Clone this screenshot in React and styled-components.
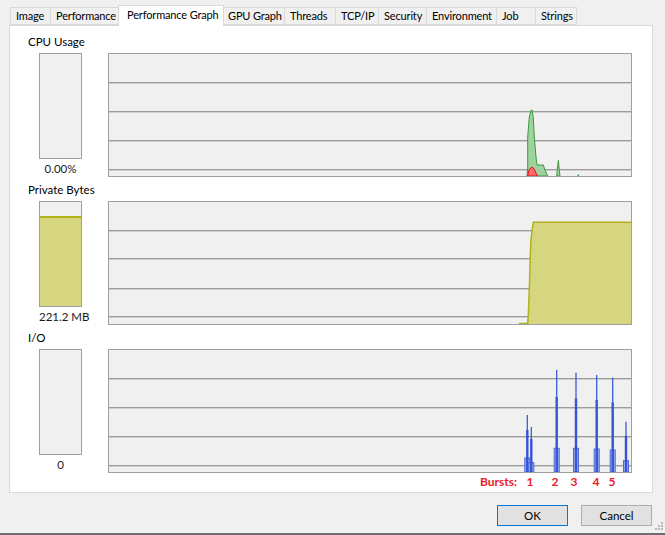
import React from 'react';
import styled, { createGlobalStyle } from 'styled-components';

const GlobalStyle = createGlobalStyle`
    html, body {
        margin: 0;
        padding: 0;
        background: #f0f0f0;
    }
    body {
        font-family: Lato, "Noto Sans", sans-serif;
        font-size: 11px;
        color: #000;
    }
`;

const Window = styled.div`
    position: relative;
    width: 665px;
    height: 535px;
    display: flex;
    flex-direction: column;
    background: #f0f0f0;
    overflow: hidden;
`;

const TabStrip = styled.div`
    display: flex;
    align-items: flex-end;
    height: 25px;
    box-sizing: border-box;
    padding: 5px 0 0 10px;
`;

const Tab = styled.div`
    box-sizing: border-box;
    width: ${props => props.w + (props.active ? 4 : 0)}px;
    height: ${props => props.active ? 21 : 18}px;
    margin: ${props => props.active ? '0 -2px -1px -2px' : '0'};
    padding-left: ${props => props.active ? 8 : 5}px;
    border: 1px solid #d9d9d9;
    border-bottom: ${props => props.active ? 'none' : '1px solid #d9d9d9'};
    border-right: ${props => props.active || props.last ? '1px solid #d9d9d9' : 'none'};
    background: ${props => props.active ? '#fff' : '#f0f0f0'};
    font-size: 11px;
    letter-spacing: -0.15px;
    line-height: ${props => props.active ? 17 : 16}px;
    white-space: nowrap;
    position: ${props => props.active ? 'relative' : 'static'};
    z-index: ${props => props.active ? 1 : 'auto'};
`;

const Panel = styled.div`
    box-sizing: border-box;
    width: 644px;
    height: 468px;
    margin-left: 9px;
    padding: 9px 0 0 18px;
    background: #fff;
    border: 1px solid #d9d9d9;
`;

const Section = styled.div`
    margin-bottom: ${props => props.last ? 0 : 6}px;
`;

const SectionLabel = styled.div`
    height: 18px;
    line-height: 14px;
    font-size: 11.5px;
`;

const Row = styled.div`
    display: flex;
    height: 124px;
    margin-left: 11px;
`;

const MeterColumn = styled.div`
    display: flex;
    flex-direction: column;
    width: 43px;
`;

const MeterBox = styled.div`
    box-sizing: border-box;
    height: 106px;
    border: 1px solid #a0a0a0;
    background: #f0f0f0;
    display: flex;
    flex-direction: column;
    justify-content: flex-end;
`;

const MeterFill = styled.div`
    background: #d6d680;
    border-top: 2px solid #b4b41e;
`;

const MeterValue = styled.div`
    margin-top: 3px;
    line-height: 14px;
    font-size: 11.5px;
    text-align: center;
    white-space: nowrap;
    color: #1a1a1a;
`;

const Graph = styled.div`
    box-sizing: border-box;
    width: 524px;
    height: 124px;
    margin-left: 26px;
    border: 1px solid #a0a0a0;
    background: #f0f0f0;
    svg {
        display: block;
    }
`;

const BurstsRow = styled.div`
    position: relative;
    width: 524px;
    height: 18px;
    margin-left: 80px;
    color: #e8202a;
    font-weight: 700;
    font-size: 12px;
    line-height: 18px;
`;

const BurstLabel = styled.span`
    position: absolute;
    top: 0;
    transform: ${props => props.center ? 'translateX(-50%)' : 'none'};
    white-space: nowrap;
`;

const ButtonBar = styled.div`
    display: flex;
    justify-content: flex-end;
    gap: 13px;
    padding: 12px 13px 0 0;
`;

const Button = styled.div`
    box-sizing: border-box;
    width: 71px;
    height: 21px;
    line-height: 19px;
    font-size: 11.5px;
    text-align: center;
    background: #e1e1e1;
    border: 1px solid ${props => props.focused ? '#0078d7' : '#adadad'};
`;

const BottomEdge = styled.div`
    margin-top: auto;
    height: 2px;
    background: #6e6e6e;
`;

const Grip = styled.svg`
    position: absolute;
    right: 2px;
    bottom: 3px;
`;

const tabs = [
    { name: 'Image', w: 40 },
    { name: 'Performance', w: 70 },
    { name: 'Performance Graph', w: 102, active: true },
    { name: 'GPU Graph', w: 62 },
    { name: 'Threads', w: 51 },
    { name: 'TCP/IP', w: 43 },
    { name: 'Security', w: 48 },
    { name: 'Environment', w: 70 },
    { name: 'Job', w: 39 },
    { name: 'Strings', w: 42 },
];

const GW = 522;
const GH = 122;

function GridLines({ ys }) {
    return (
        <g>
            {ys.map(y => (
                <g key={y}>
                    <rect x="0" y={y} width={GW} height="1" fill="#9c9c9c" />
                    <rect x="0" y={y + 1} width={GW} height="1" fill="#cfcfcf" />
                </g>
            ))}
        </g>
    );
}

function CpuChart() {
    return (
        <svg width={GW} height={GH}>
            <GridLines ys={[28, 57, 86, 115]} />
            <polygon
                points="418,122 418.7,114 418.7,83 420.3,63 422.2,56 423,56 424.3,64 425.3,83 427,103 428,111 434.3,111 436,116 438.7,122"
                fill="#9fd29f"
                stroke="#3a9a3a"
                strokeWidth="1"
            />
            <path d="M418.7,122 L419.6,117 Q422.7,110 425.6,116 L428.3,122 Z" fill="#ff6a6a" stroke="#e01010" strokeWidth="1" />
            <polygon points="447.7,122 449.3,106.5 451,122" fill="#9fd29f" stroke="#3a9a3a" strokeWidth="1" />
            <rect x="468.5" y="120.5" width="1.5" height="1.5" fill="#3a9a3a" />
        </svg>
    );
}

function MemoryChart() {
    const steps = '418.7,121.5 419.3,113.7 420,95.3 420.7,75.3 421.3,53.7 422,37 423.3,27 424.3,20.3 522,20.3';
    return (
        <svg width={GW} height={GH}>
            <GridLines ys={[28, 56, 86, 114]} />
            <polygon points={`418.7,122 ${steps} 522,122`} fill="#d6d680" />
            <polyline points={`410,121.5 ${steps}`} fill="none" stroke="#b0b01a" strokeWidth="1.5" />
        </svg>
    );
}

const spikes = [
    { x: 418.3, peak: 65, thick: 80, box: 108 },
    { x: 422.3, peak: 77, thick: 89, box: 112.7 },
    { x: 447.7, peak: 20, thick: 46.7, box: 98.3 },
    { x: 467, peak: 22.7, thick: 48.3, box: 98.3 },
    { x: 487.7, peak: 25, thick: 50, box: 99 },
    { x: 503.7, peak: 27.7, thick: 52.3, box: 100 },
    { x: 517, peak: 71.7, thick: 86, box: 110.7 },
];

function IoChart() {
    return (
        <svg width={GW} height={GH}>
            <GridLines ys={[28, 57, 86, 115]} />
            {spikes.map(s => (
                <g key={s.x}>
                    <rect x={s.x - 2.5} y={s.box} width="5" height={GH - s.box} fill="#a6b6ec" stroke="#4a66d8" strokeWidth="1" />
                    <rect x={s.x - 1.2} y={s.thick} width="2.4" height={GH - s.thick} fill="#3553d6" />
                    <rect x={s.x - 0.6} y={s.peak} width="1.2" height={s.thick - s.peak} fill="#2f4fd6" />
                </g>
            ))}
        </svg>
    );
}

const bursts = [
    { label: '1', x: 422 },
    { label: '2', x: 447 },
    { label: '3', x: 466 },
    { label: '4', x: 488 },
    { label: '5', x: 504 },
];

function Meter({ value, fill }) {
    return (
        <MeterColumn>
            <MeterBox>
                {fill > 0 && <MeterFill style={{ height: `${Math.round(fill * 104)}px` }} />}
            </MeterBox>
            <MeterValue>{value}</MeterValue>
        </MeterColumn>
    );
}

export default function App() {
    return (
        <Window>
            <GlobalStyle />
            <TabStrip>
                {tabs.map((t, i) => (
                    <Tab key={t.name} w={t.w} active={t.active} last={i === tabs.length - 1}>
                        {t.name}
                    </Tab>
                ))}
            </TabStrip>
            <Panel>
                <Section>
                    <SectionLabel>CPU Usage</SectionLabel>
                    <Row>
                        <Meter value="0.00%" fill={0} />
                        <Graph><CpuChart /></Graph>
                    </Row>
                </Section>
                <Section>
                    <SectionLabel>Private Bytes</SectionLabel>
                    <Row>
                        <Meter value="221.2 MB" fill={0.845} />
                        <Graph><MemoryChart /></Graph>
                    </Row>
                </Section>
                <Section last>
                    <SectionLabel>I/O</SectionLabel>
                    <Row>
                        <Meter value="0" fill={0} />
                        <Graph><IoChart /></Graph>
                    </Row>
                    <BurstsRow>
                        <BurstLabel style={{ left: '372px' }}>Bursts:</BurstLabel>
                        {bursts.map(b => (
                            <BurstLabel key={b.label} center style={{ left: `${b.x}px` }}>{b.label}</BurstLabel>
                        ))}
                    </BurstsRow>
                </Section>
            </Panel>
            <ButtonBar>
                <Button focused>OK</Button>
                <Button>Cancel</Button>
            </ButtonBar>
            <BottomEdge />
            <Grip width="10" height="10" viewBox="0 0 10 10">
                {[[8, 0], [8, 3], [5, 3], [8, 6], [5, 6], [2, 6]].map(([x, y]) => (
                    <rect key={`${x}-${y}`} x={x} y={y} width="2" height="2" fill="#b8b8b8" />
                ))}
            </Grip>
        </Window>
    );
}
